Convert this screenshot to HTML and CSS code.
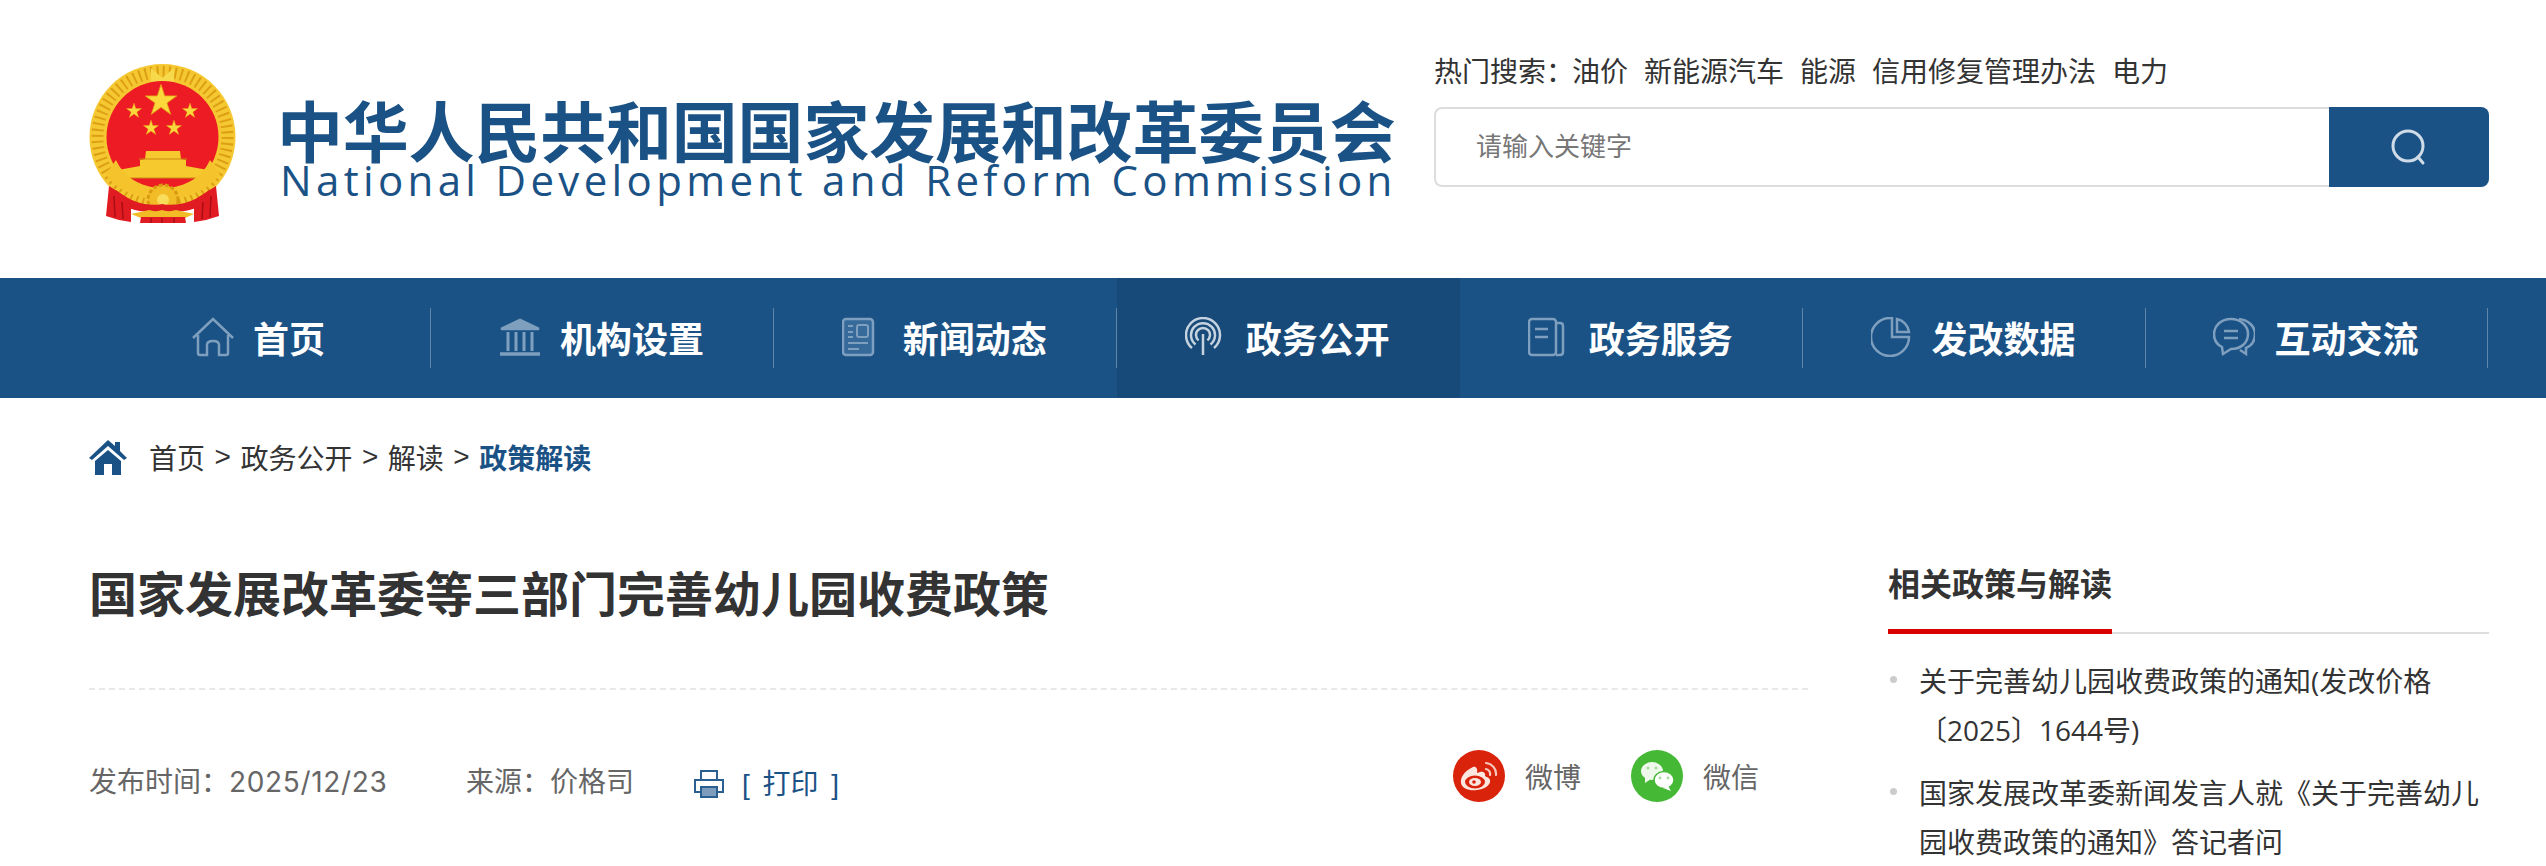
FILE: index.html
```html
<!DOCTYPE html>
<html lang="zh-CN">
<head>
    <meta charset="UTF-8">
    <meta name="viewport" content="width=device-width, initial-scale=1.0">
    <title>国家发展改革委等三部门完善幼儿园收费政策</title>
    <link rel="stylesheet" href="styles.css">
</head>
<body>
    <header class="top">
        <div class="logo">
            <svg class="emblem" viewBox="0 0 147 159">
                <defs>
                    <polygon id="star" points="0,-1 .225,-.309 .951,-.309 .363,.118 .588,.809 0,.382 -.588,.809 -.363,.118 -.951,-.309 -.225,-.309"/>
                </defs>
                <circle cx="73.5" cy="73" r="73" fill="#f5c832"/>
                <circle cx="73.5" cy="73" r="65" fill="none" stroke="#dd9f14" stroke-width="12" stroke-dasharray="2 4"/>
                <path d="M62 4 L73 14 L85 4 L85 19 L62 19Z" fill="#f7d94c"/>
                <circle cx="73.5" cy="73" r="56" fill="#ed1c24"/>
                <g fill="#fbd83c" stroke="#e3a215" stroke-width=".05">
                    <use href="#star" transform="translate(72 37) scale(16.5)"/>
                    <use href="#star" transform="translate(45 47) scale(8)"/>
                    <use href="#star" transform="translate(101 47) scale(8)"/>
                    <use href="#star" transform="translate(62 64) scale(8)"/>
                    <use href="#star" transform="translate(85 64) scale(8)"/>
                </g>
                <path d="M29 106 L51 102 L51 96 L56 95 L57 87 L91 87 L92 95 L97 96 L97 102 L119 106 L119 114 L29 114Z" fill="#f6c92f"/>
                <path d="M50 95 H98 M29 114 H119" stroke="#c98a10" stroke-width="1" fill="none"/>
                <path d="M17 110 C24 124 50 136 74 136 C98 136 122 124 131 110 L121 96 C112 116 92 124 74 124 C56 124 36 116 27 96Z" fill="#f5c42c"/>
                <circle cx="74" cy="136" r="15" fill="#f2bc26" stroke="#d99a12" stroke-width="3" stroke-dasharray="4 2"/>
                <circle cx="74" cy="136" r="6" fill="#f9dc5a"/>
                <path d="M20 122 L42 136 L42 158 L30 156 L17 152Z M127 122 L105 136 L105 158 L117 156 L130 152Z" fill="#e01b22"/>
                <path d="M27 126 C40 138 60 143 73 140 C87 143 107 138 120 126 L124 135 C108 147 88 150 73 146 C59 150 38 147 23 135Z" fill="#e01b22"/>
                <path d="M42 150 L60 146 L73 149 L87 146 L105 150 L96 154 L52 154Z" fill="#f2bc26"/>
                <path d="M52 153 H96 L97 159 H51Z" fill="#e01b22"/>
                <path d="M25 132 L26 153 M33 138 L34 155 M114 138 L113 155 M122 132 L121 153 M62 154 V159 M73 154 V159 M85 154 V159" stroke="#a90f14" stroke-width="1.5" fill="none"/>
            </svg>
            <div class="logo-text">
                <div class="logo-cn">中华人民共和国国家发展和改革委员会</div>
                <div class="logo-en">National Development and Reform Commission</div>
            </div>
        </div>
        <div class="search">
            <div class="hot">
                <span>热门搜索：</span><a>油价</a><a>新能源汽车</a><a>能源</a><a>信用修复管理办法</a><a>电力</a>
            </div>
            <div class="search-box">
                <div class="search-input">请输入关键字</div>
                <div class="search-btn">
                    <svg viewBox="0 0 40 40" width="40" height="40" fill="none" stroke="#cfdbe6" stroke-width="3">
                        <circle cx="19" cy="19" r="15"/>
                        <path d="M29 30l5 6" stroke-linecap="round"/>
                    </svg>
                </div>
            </div>
        </div>
    </header>

    <nav class="nav">
        <a class="nav-item">
            <svg class="nav-icon" viewBox="0 0 42 40">
                <path d="M1 21 L21 2 L41 21 M6 18 V36 Q6 38 8 38 H15 V28 Q15 24 21 24 Q27 24 27 28 V38 H34 Q36 38 36 36 V18"/>
            </svg>
            首页
        </a>
        <a class="nav-item">
            <svg class="nav-icon" viewBox="0 0 42 40">
                <path d="M2 12 L21 3 L40 12Z" fill="#7f9fbe"/>
                <path d="M9 15 V34 M17 15 V34 M25 15 V34 M33 15 V34" stroke-width="3"/>
                <path d="M1 37 H41" stroke-width="3.5"/>
            </svg>
            机构设置
        </a>
        <a class="nav-item">
            <svg class="nav-icon" viewBox="0 0 42 40">
                <rect x="1" y="2" width="30" height="36" rx="3" fill="#356a9b"/>
                <path d="M6 9 H11 M6 15 H11 M6 20 H11 M6 26 H26 M6 32 H17" stroke-width="2"/>
                <rect x="15" y="8" width="11" height="12" rx="2" stroke-width="2"/>
            </svg>
            新闻动态
        </a>
        <a class="nav-item active">
            <svg class="nav-icon" viewBox="0 0 42 40">
                <path d="M18 17 V38 M7 31 A17 17 0 1 1 29 31 M10.500 27.500 A12 12 0 1 1 25.500 27.500 M13.600 23.400 A7 7 0 1 1 22.400 23.400"/>
            </svg>
            政务公开
        </a>
        <a class="nav-item">
            <svg class="nav-icon" viewBox="0 0 42 40">
                <rect x="1" y="2" width="27" height="36" rx="3"/>
                <path d="M7 12 H20 M7 20 H20 M28 6 H32 Q35 6 35 9 V35 Q35 38 32 38 H28"/>
            </svg>
            政务服务
        </a>
        <a class="nav-item">
            <svg class="nav-icon" viewBox="0 0 42 40">
                <path d="M19 1 A19 19 0 1 0 38 20 H21 V1 Z M26 2 A15 15 0 0 1 38 15 H26Z"/>
            </svg>
            发改数据
        </a>
        <a class="nav-item">
            <svg class="nav-icon" viewBox="0 0 42 40">
                <path d="M18 2 C8 2 1 9 1 17 C1 24 5 28 9 30 L10 37 L18 32 C29 32 35 25 35 17 C35 9 28 2 18 2Z"/>
                <path d="M26 2 C36 3 42 10 42 17 C42 24 38 29 33 31 L33 37 L27 33"/>
                <path d="M11 14 H25 M11 21 H25"/>
            </svg>
            互动交流
        </a>
    </nav>

    <div class="crumbs">
        <svg class="crumb-home" viewBox="0 0 38 36">
            <path d="M19 1 L26 7 V3 H31 V12 L38 19 L35 21 L19 7 L3 21 L0 19Z M19 11 L32 22 V36 H23 V25 H15 V36 H6 V22Z" fill="#1a5286"/>
        </svg>
        <a>首页</a><i>&gt;</i><a>政务公开</a><i>&gt;</i><a>解读</a><i>&gt;</i><b>政策解读</b>
    </div>

    <div class="main">
        <article class="article">
            <h1>国家发展改革委等三部门完善幼儿园收费政策</h1>
            <div class="meta">
                <span class="meta-time">发布时间：<span class="meta-date">2025/12/23</span></span>
                <span class="meta-source">来源：价格司</span>
                <a class="print">
                    <svg viewBox="0 0 32 30" width="32" height="30" fill="none" stroke="#2a5f92" stroke-width="2">
                        <path d="M8 11 V2 H24 V11 M8 23 H2 V11 H30 V23 H24"/>
                        <rect x="8" y="18" width="16" height="10" fill="#7f9dbc"/>
                    </svg>
                    <span>[ 打印 ]</span>
                </a>
                <div class="share">
                    <a class="share-item">
                        <svg class="share-icon" viewBox="0 0 52 52">
                            <circle cx="26" cy="26" r="26" fill="#d9230b"/>
                            <path d="M20 17 C11 21 7 28 8 33 C9 39 17 41 24 40 C32 39 38 35 37 30 C36 27 33 27 32 26 C33 23 30 21 27 22 L24 23 C25 19 23 16 20 17Z" fill="#fbe6e0"/>
                            <ellipse cx="22" cy="32" rx="10" ry="6.500" fill="#d9230b"/>
                            <ellipse cx="22" cy="32" rx="6" ry="4" fill="#fbe6e0"/>
                            <circle cx="21" cy="32" r="1.800" fill="#d9230b"/>
                            <path d="M33 19 A5 5 0 0 1 37 25 M33 13 A11 11 0 0 1 43 25" fill="none" stroke="#f7c9bf" stroke-width="2.200" stroke-linecap="round"/>
                        </svg>
                        微博
                    </a>
                    <a class="share-item">
                        <svg class="share-icon" viewBox="0 0 52 52">
                            <circle cx="26" cy="26" r="26" fill="#45b935"/>
                            <ellipse cx="21" cy="21" rx="11" ry="9" fill="#eef9ec"/>
                            <path d="M14 27 L14 33 L20 29Z" fill="#eef9ec"/>
                            <ellipse cx="33" cy="30" rx="10" ry="8.500" fill="#fff" stroke="#45b935" stroke-width="1.500"/>
                            <path d="M37 36 L40 41 L32 38Z" fill="#fff"/>
                            <circle cx="17" cy="18" r="1.500" fill="#a5dc9d"/>
                            <circle cx="25" cy="18" r="1.500" fill="#a5dc9d"/>
                            <circle cx="29" cy="28" r="1.400" fill="#a5dc9d"/>
                            <circle cx="37" cy="28" r="1.400" fill="#a5dc9d"/>
                        </svg>
                        微信
                    </a>
                </div>
            </div>
        </article>

        <aside class="side">
            <h2><span>相关政策与解读</span></h2>
            <ul class="side-list">
                <li>关于完善幼儿园收费政策的通知(发改价格〔2025〕1644号)</li>
                <li>国家发展改革委新闻发言人就《关于完善幼儿园收费政策的通知》答记者问</li>
            </ul>
        </aside>
    </div>
</body>
</html>
```

FILE: styles.css
```css
html, body {
    height: 866px;
    overflow: hidden;
}

body {
    margin: 0;
    background: #fff;
    color: #333;
    font-family: "Liberation Sans", "Noto Sans CJK SC", sans-serif;
}

a {
    color: inherit;
    text-decoration: none;
}

.top {
    height: 278px;
    box-sizing: border-box;
    padding: 0 57px 0 89px;
    display: flex;
    align-items: center;
    justify-content: space-between;
}

.logo {
    display: flex;
    align-items: center;
}

.emblem {
    width: 147px;
    height: 159px;
    margin: 8px 41px 0 0;
}

.logo-text {
    color: #1a5286;
    white-space: nowrap;
    margin-top: 16px;
}

.logo-cn {
    font-family: "Noto Sans CJK SC", sans-serif;
    font-size: 66px;
    font-weight: 700;
    line-height: 66px;
    letter-spacing: -.2px;
}

.logo-en {
    font-family: "Open Sans", sans-serif;
    font-size: 42px;
    line-height: 38px;
    letter-spacing: 4.350px;
    margin-left: 3px;
}

.search {
    width: 1055px;
    margin-bottom: 36px;
}

.hot {
    font-size: 28px;
    line-height: 36px;
    color: #333;
    margin-bottom: 16px;
    white-space: nowrap;
}

.hot span {
    margin-right: -2px;
}

.hot a {
    margin-right: 16px;
}

.search-box {
    display: flex;
    height: 80px;
}

.search-input {
    flex: 1;
    border: 2px solid #ddd;
    border-right: 0;
    border-radius: 8px 0 0 8px;
    padding-left: 40px;
    font-size: 26px;
    line-height: 76px;
    color: #777;
}

.search-btn {
    width: 160px;
    background: #1a5286;
    border-radius: 0 8px 8px 0;
    display: flex;
    align-items: center;
    justify-content: center;
}

.nav {
    height: 120px;
    background: #1a5286;
    padding: 0 57.500px 0 88px;
    display: flex;
}

.nav-item {
    flex: 1;
    display: flex;
    align-items: center;
    justify-content: center;
    gap: 19px;
    color: #fff;
    font-size: 36px;
    font-weight: 700;
    position: relative;
    padding-bottom: 3px;
    padding-right: 2px;
}

.nav-item::after {
    content: "";
    position: absolute;
    right: 0;
    top: 30px;
    height: 60px;
    width: 1px;
    background: #5f86aa;
}

.nav-item.active {
    background: #184a79;
}

.nav-item.active::after {
    display: none;
}

.nav-icon {
    width: 42px;
    height: 40px;
    fill: none;
    stroke: #7f9fbe;
    stroke-width: 2.5;
}

.nav-item.active .nav-icon {
    stroke: #c5d3e0;
}

.crumbs {
    height: 120px;
    box-sizing: border-box;
    padding: 0 0 3px 89px;
    display: flex;
    align-items: center;
    font-size: 28px;
    color: #333;
}

.crumb-home {
    width: 38px;
    height: 36px;
    margin-right: 22px;
}

.crumbs i {
    font-style: normal;
    margin: 0 9.500px;
}

.crumbs b {
    color: #1a5286;
}

.main {
    padding: 0 57px 0 89px;
    display: flex;
    justify-content: space-between;
}

.article {
    width: 1719px;
}

.article h1 {
    margin: 0;
    font-size: 48px;
    line-height: 68px;
    padding: 44px 0 58px;
    color: #333;
    border-bottom: 2px dashed #e8e8e8;
}

.meta {
    display: flex;
    align-items: center;
    height: 100px;
    margin-top: 40px;
    font-size: 28px;
    color: #666;
}

.meta-time {
    width: 377px;
    font-family: "Inter", "Noto Sans CJK SC", sans-serif;
    white-space: nowrap;
}

.meta-date {
    letter-spacing: .65px;
}

.meta-source {
    width: 227px;
}

.print {
    display: flex;
    align-items: center;
    gap: 17px;
    color: #1a5286;
    font-size: 28px;
    margin-top: 4px;
}

.print svg {
    margin-top: 4px;
}

.print span {
    word-spacing: 5px;
}

.share {
    margin-left: auto;
    margin-right: 49px;
    display: flex;
    gap: 50px;
    margin-top: -8px;
}

.share-item {
    display: flex;
    align-items: center;
    gap: 20px;
}

.share-icon {
    width: 52px;
    height: 52px;
}

.side {
    width: 601px;
}

.side h2 {
    margin: 0;
    padding-top: 45px;
    height: 116px;
    box-sizing: border-box;
    font-size: 32px;
    line-height: 44px;
    color: #333;
    border-bottom: 2px solid #ddd;
}

.side h2 span {
    display: inline-block;
    height: 71px;
    box-sizing: border-box;
    border-bottom: 5px solid #d90000;
}

.side-list {
    list-style: none;
    margin: 0;
    padding: 23px 0 0;
}

.side-list li {
    position: relative;
    padding-left: 31px;
    font-family: "Open Sans", "Noto Sans CJK SC", sans-serif;
    font-size: 28px;
    line-height: 48.500px;
    color: #333;
    margin-bottom: 15px;
}

.side-list li::before {
    content: "";
    position: absolute;
    left: 2px;
    top: 19px;
    width: 7px;
    height: 7px;
    border-radius: 50%;
    background: #ccc;
}
```
